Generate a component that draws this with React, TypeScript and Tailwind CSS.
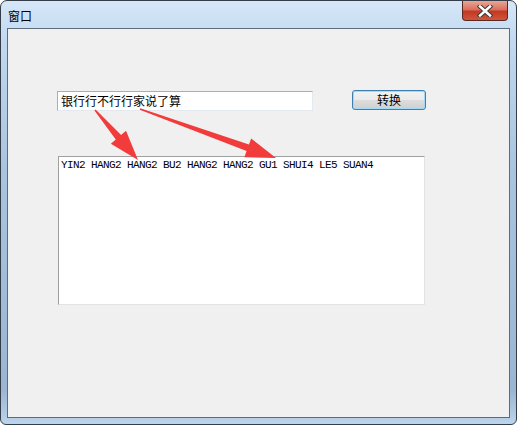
import React from "react";

type Pt = [number, number];

// builds a tapered arrow polygon from tail to tip
function arrowPoints(tail: Pt, tip: Pt, headLen: number, headW: number, tailW: number, neckW: number) {
  const dx = tip[0] - tail[0];
  const dy = tip[1] - tail[1];
  const len = Math.hypot(dx, dy);
  const ux = dx / len;
  const uy = dy / len;
  const nx = -uy;
  const ny = ux;
  const neck: Pt = [tip[0] - ux * headLen, tip[1] - uy * headLen];
  const p = (b: Pt, w: number): string => `${b[0] + nx * w},${b[1] + ny * w}`;
  return [
    p(tail, tailW / 2),
    p(neck, neckW / 2),
    p(neck, headW / 2),
    `${tip[0]},${tip[1]}`,
    p(neck, -headW / 2),
    p(neck, -neckW / 2),
    p(tail, -tailW / 2),
  ].join(" ");
}

function Arrows() {
  return (
    <svg className="absolute left-0 top-0 pointer-events-none" width={517} height={425} viewBox="0 0 517 425">
      <polygon points={arrowPoints([95, 110], [138, 160], 30, 20, 1.5, 7)} fill="#f23b3b" />
      <polygon points={arrowPoints([140, 109], [276, 158], 30, 20, 1.5, 7)} fill="#f23b3b" />
    </svg>
  );
}

function CloseButton() {
  return (
    <div className="absolute right-[8px] top-0 w-[46px] h-[20px] rounded-b-[4px] border border-t-0 border-[#5a2a22] bg-[linear-gradient(to_bottom,#e9a797_0%,#d9705c_45%,#c23a22_55%,#d0553d_100%)] flex items-center justify-center">
      <svg width="16" height="12" viewBox="0 0 16 12">
        <path d="M3 1.5 L13 10.5 M13 1.5 L3 10.5" stroke="#3a3a3a" strokeWidth="4.5" strokeLinecap="square" />
        <path d="M3 1.5 L13 10.5 M13 1.5 L3 10.5" stroke="#ffffff" strokeWidth="2.5" strokeLinecap="square" />
      </svg>
    </div>
  );
}

export default function App() {
  return (
    <div className="relative w-[517px] h-[425px] overflow-hidden bg-white">
      <div
        className="relative w-[517px] h-[425px] rounded-t-[7px] rounded-b-[6px] border border-[#343d48] bg-[linear-gradient(to_bottom,#d6e7f8_0%,#c0d8f0_10%,#a9c4df_40%,#9bb6d2_92%,#bcd4ec_100%)] flex flex-col"
        style={{ fontFamily: '"Noto Sans CJK SC", "Liberation Sans", sans-serif' }}
      >
        {/* title bar */}
        <div className="h-[27px] flex items-center pl-[7px] pt-[2px]">
          <span className="text-[12px] leading-none text-black">窗口</span>
        </div>
        <CloseButton />

        {/* client area */}
        <div className="mx-[6px] mb-[6px] flex-1 border border-[#5d6b7b] bg-[#f0f0f0] pl-[49px] pt-[61px]">
          <div className="flex items-start">
            <div className="mt-[1px] w-[256px] h-[20px] bg-white border border-[#e3e9ef] border-t-[#abadb3] border-l-[#abadb3] flex items-center pl-[3px]">
              <span className="text-[12px] leading-none text-black">银行行不行行家说了算</span>
            </div>
            <div className="ml-[39px] w-[74px] h-[20px] rounded-[3px] border border-[#3c7fb1] shadow-[inset_0_0_0_1px_#a4d8f7] bg-[linear-gradient(to_bottom,#f2f2f2_0%,#ebebeb_48%,#dddddd_52%,#cfcfcf_100%)] flex items-center justify-center">
              <span className="text-[12px] leading-none text-black">转换</span>
            </div>
          </div>
          <div className="mt-[45px] ml-[1px] w-[367px] h-[149px] bg-white border border-[#e3e3e3] border-t-[#a0a0a0] border-l-[#a0a0a0] pl-[2px] pt-[2px]">
            <div
              className="text-[11px] leading-[12px] tracking-[-0.6px] text-black whitespace-pre"
              style={{ fontFamily: '"Liberation Mono", monospace' }}
            >
              YIN2 HANG2 HANG2 BU2 HANG2 HANG2 GU1 SHUI4 LE5 SUAN4
            </div>
          </div>
        </div>
      </div>
      <Arrows />
    </div>
  );
}
